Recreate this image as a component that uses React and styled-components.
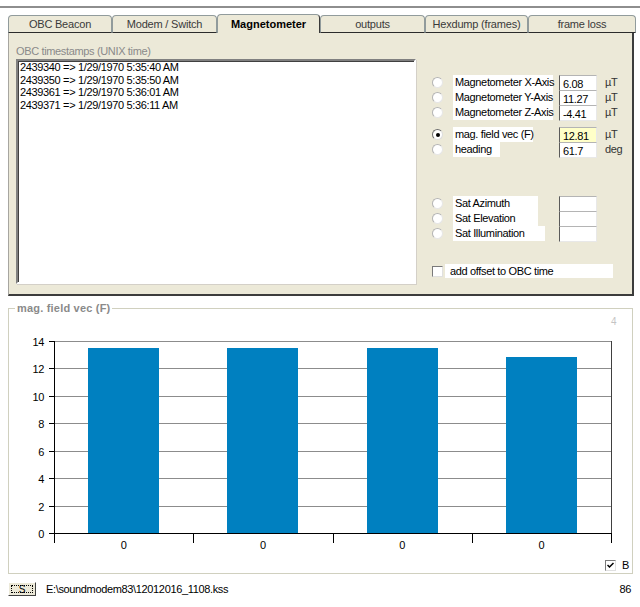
import React from "react";
import styled, { createGlobalStyle } from "styled-components";

const GlobalStyle = createGlobalStyle`
  html, body {
    margin: 0;
    padding: 0;
    background: #fff;
  }
  body {
    font-family: "Liberation Sans", Arial, sans-serif;
    font-size: 11px;
    letter-spacing: -0.35px;
    color: #000;
  }
`;

const Page = styled.div`
  width: 640px;
  height: 607px;
  padding-top: 6px;
  box-sizing: border-box;
  overflow: hidden;
`;

const TopRule = styled.div`
  height: 2px;
  background: #8e8e8e;
`;

const Body = styled.div`
  padding: 0 4px 0 8px;
`;

const TabStrip = styled.div`
  display: flex;
  align-items: flex-end;
  height: 19px;
  margin-top: 6px;
`;

const Tab = styled.div`
  width: ${(p) => p.$w}px;
  height: ${(p) => (p.$active ? 19 : 18)}px;
  box-sizing: border-box;
  display: flex;
  align-items: center;
  justify-content: center;
  background: #ece9d8;
  border: 1px solid #919b9c;
  border-bottom: ${(p) => (p.$active ? "none" : "1px solid #2b2b2b")};
  border-right-color: ${(p) => (p.$active ? "#3a3a3a" : "#919b9c")};
  border-radius: 4px 4px 0 0;
  color: ${(p) => (p.$active ? "#000" : "#3a3a3a")};
  font-weight: ${(p) => (p.$active ? 700 : 400)};
  letter-spacing: ${(p) => (p.$active ? "0" : "-0.2px")};
  white-space: nowrap;
`;

const Panel = styled.div`
  width: 626px;
  height: 263px;
  box-sizing: border-box;
  background: #ece9d8;
  border-left: 1px solid #a7a6a0;
  border-right: 2px solid #3c3c3c;
  border-bottom: 2px solid #3c3c3c;
  display: flex;
  padding-left: 7px;
`;

const LeftCol = styled.div`
  width: 400px;
  display: flex;
  flex-direction: column;
`;

const Caption = styled.div`
  margin-top: 11px;
  height: 15px;
  line-height: 14px;
  color: #8a8a8a;
`;

const ListBox = styled.div`
  height: 225px;
  box-sizing: border-box;
  background: #fff;
  border: 2px solid;
  border-color: #808080 #fff #fff #808080;
  box-shadow: inset 1px 1px 0 #404040, 1px 1px 0 #d4d0c8;
  padding: 0 0 0 2px;
`;

const ListItem = styled.div`
  line-height: 12.5px;
  white-space: nowrap;
`;

const RightCol = styled.div`
  margin-left: 16px;
  display: flex;
  flex-direction: column;
`;

const RowGroup = styled.div`
  display: grid;
  grid-template-columns: 21px 106px 38px auto;
  grid-auto-rows: 15px;
  margin-top: ${(p) => p.$top}px;
`;

const Cell = styled.div`
  display: flex;
  align-items: center;
`;

const Radio = styled.span`
  width: 11px;
  height: 11px;
  box-sizing: border-box;
  border-radius: 50%;
  border: 1px solid;
  border-color: ${(p) =>
    p.$checked ? "#6f6f6f #dcdcdc #dcdcdc #6f6f6f" : "#b4b4b4 #e6e6e6 #e6e6e6 #b4b4b4"};
  background: #fff;
  display: flex;
  align-items: center;
  justify-content: center;

  &::after {
    content: "";
    width: 4px;
    height: 4px;
    border-radius: 50%;
    background: ${(p) => (p.$checked ? "#000" : "transparent")};
  }
`;

const Label = styled.span`
  display: block;
  width: ${(p) => p.$w}px;
  height: 15px;
  line-height: 14px;
  padding-left: 2px;
  box-sizing: border-box;
  background: #fff;
  white-space: nowrap;
`;

const TextBox = styled.div`
  width: 38px;
  height: 16px;
  box-sizing: border-box;
  background: ${(p) => (p.$hl ? "#ffffc8" : "#fff")};
  border-left: 1px solid #5a5a5a;
  border-top: 1px solid #b4b4b4;
  border-right: 1px solid #e8e8e8;
  border-bottom: 1px solid #e8e8e8;
  padding: 2px 0 0 3px;
  line-height: 13px;
`;

const Unit = styled.div`
  padding-left: 8px;
  line-height: 14px;
  color: #333;
`;

const CheckRow = styled.div`
  display: flex;
  align-items: center;
  margin-top: 23px;
`;

const CheckBox = styled.span`
  width: 11px;
  height: 11px;
  box-sizing: border-box;
  background: #fff;
  border: 1px solid;
  border-color: #7a7a7a #e0e0e0 #e0e0e0 #7a7a7a;
  display: flex;
  align-items: center;
  justify-content: center;
`;

const CheckLabel = styled.span`
  margin-left: 2px;
  width: 168px;
  height: 14px;
  line-height: 14px;
  padding-left: 5px;
  box-sizing: border-box;
  background: #fff;
  white-space: nowrap;
`;

const Group = styled.fieldset`
  position: relative;
  margin: 6px 0 0 0;
  padding: 0;
  width: 625px;
  height: 272px;
  box-sizing: border-box;
  border: 1px solid #d0d0bf;
  min-width: 0;
`;

const Legend = styled.legend`
  margin-left: 6px;
  padding: 0 2px;
  font-weight: 700;
  letter-spacing: 0.2px;
  color: #8a8a8a;
  line-height: 13px;
`;

const CornerMark = styled.span`
  position: absolute;
  top: 0;
  right: 3px;
  width: 31px;
  height: 13px;
  background: #fff;
  color: #c4c4c4;
  font-size: 10px;
  line-height: 13px;
  text-align: center;
`;

const Chart = styled.svg`
  display: block;
`;

const LegendRow = styled.div`
  display: flex;
  justify-content: flex-end;
  align-items: center;
  height: 14px;
  padding-right: 3px;
  gap: 6px;
`;

const StatusBar = styled.div`
  display: flex;
  align-items: center;
  height: 14px;
  margin-top: 8px;
`;

const SmallButton = styled.div`
  width: 28px;
  height: 14px;
  box-sizing: border-box;
  background: #ece9d8;
  border: 1px solid;
  border-color: #fff #404040 #404040 #fff;
  display: flex;
  align-items: center;
  justify-content: center;
  font-size: 10px;
  outline: 1px dotted #000;
  outline-offset: -4px;
`;

const PathText = styled.span`
  margin-left: 10px;
`;

const Count = styled.span`
  margin-left: auto;
  padding-right: 5px;
`;

const tabs = [
  { name: "OBC Beacon", w: 104 },
  { name: "Modem / Switch", w: 105 },
  { name: "Magnetometer", w: 103, active: true },
  { name: "outputs", w: 105 },
  { name: "Hexdump (frames)", w: 103 },
  { name: "frame loss", w: 108 },
];

const stamps = [
  "2439340 => 1/29/1970 5:35:40 AM",
  "2439350 => 1/29/1970 5:35:50 AM",
  "2439361 => 1/29/1970 5:36:01 AM",
  "2439371 => 1/29/1970 5:36:11 AM",
];

const axisRows = [
  { label: "Magnetometer X-Axis", w: 100, value: "6.08", unit: "µT" },
  { label: "Magnetometer Y-Axis", w: 100, value: "11.27", unit: "µT" },
  { label: "Magnetometer Z-Axis", w: 100, value: "-4.41", unit: "µT" },
];

const fieldRows = [
  { label: "mag. field vec (F)", w: 80, value: "12.81", unit: "µT", checked: true, hl: true },
  { label: "heading", w: 47, value: "61.7", unit: "deg" },
];

const satRows = [
  { label: "Sat Azimuth", w: 85 },
  { label: "Sat Elevation", w: 85 },
  { label: "Sat Illumination", w: 92 },
];

const bars = [13.5, 13.5, 13.5, 12.81];

// plot geometry in page coordinates
const X0 = 54;
const X1 = 611;
const Y0 = 533;
const YTOP = 341;
const unit = (Y0 - YTOP) / 14;
const cat = (X1 - X0) / bars.length;

function Rows({ rows, top }) {
  return (
    <RowGroup $top={top}>
      {rows.map((r) => (
        <React.Fragment key={r.label}>
          <Cell>
            <Radio $checked={r.checked} />
          </Cell>
          <Cell>
            <Label $w={r.w}>{r.label}</Label>
          </Cell>
          <Cell>
            <TextBox $hl={r.hl}>{r.value}</TextBox>
          </Cell>
          <Unit>{r.unit}</Unit>
        </React.Fragment>
      ))}
    </RowGroup>
  );
}

function BarChart() {
  const grid = [0, 2, 4, 6, 8, 10, 12, 14];
  return (
    <Chart width="623" height="243" viewBox="9 315 623 243">
      {grid.map((v) => {
        const y = Math.round(Y0 - v * unit) + 0.5;
        return (
          <g key={v}>
            {v > 0 && <line x1={X0} x2={X1} y1={y} y2={y} stroke="#8c8c8c" />}
            <line x1={X0 - 5} x2={X0} y1={y} y2={y} stroke="#000" />
            <text
              x={44}
              y={y + 4}
              textAnchor="end"
              fontSize="11"
              fontFamily="Liberation Sans, Arial, sans-serif"
            >
              {v}
            </text>
          </g>
        );
      })}
      {bars.map((b, i) => {
        const x = X0 + i * cat + 34;
        const top = Y0 - b * unit;
        return (
          <rect key={i} x={Math.round(x)} y={Math.round(top)} width={71} height={Math.round(Y0 - top)} fill="#0080c0" />
        );
      })}
      <line x1={X1 + 0.5} x2={X1 + 0.5} y1={YTOP} y2={Y0} stroke="#404040" />
      <line x1={X0 + 0.5} x2={X0 + 0.5} y1={YTOP} y2={Y0} stroke="#000" />
      <line x1={X0} x2={X1 + 1} y1={Y0 + 0.5} y2={Y0 + 0.5} stroke="#000" />
      {[0, 1, 2, 3, 4].map((i) => {
        const x = Math.round(X0 + i * cat) + 0.5;
        return <line key={i} x1={x} x2={x} y1={Y0} y2={Y0 + 10} stroke="#000" />;
      })}
      {bars.map((b, i) => (
        <text
          key={i}
          x={X0 + i * cat + cat / 2}
          y={549}
          textAnchor="middle"
          fontSize="11"
          fontFamily="Liberation Sans, Arial, sans-serif"
        >
          0
        </text>
      ))}
    </Chart>
  );
}

const App = () => {
  return (
    <Page>
      <GlobalStyle />
      <TopRule />
      <Body>
        <TabStrip>
          {tabs.map((t) => (
            <Tab key={t.name} $w={t.w} $active={t.active}>
              {t.name}
            </Tab>
          ))}
        </TabStrip>
        <Panel>
          <LeftCol>
            <Caption>OBC timestamps (UNIX time)</Caption>
            <ListBox>
              {stamps.map((s) => (
                <ListItem key={s}>{s}</ListItem>
              ))}
            </ListBox>
          </LeftCol>
          <RightCol>
            <Rows rows={axisRows} top={42} />
            <Rows rows={fieldRows} top={7} />
            <Rows rows={satRows} top={39} />
            <CheckRow>
              <CheckBox />
              <CheckLabel>add offset to OBC time</CheckLabel>
            </CheckRow>
          </RightCol>
        </Panel>
        <Group>
          <Legend>mag. field vec (F)</Legend>
          <CornerMark>4</CornerMark>
          <BarChart />
          <LegendRow>
            <CheckBox>
              <svg width="7" height="7" viewBox="0 0 7 7">
                <path d="M0.5 3 L2.5 5 L6.5 1" stroke="#000" strokeWidth="1.5" fill="none" />
              </svg>
            </CheckBox>
            <span>B</span>
          </LegendRow>
        </Group>
        <StatusBar>
          <SmallButton>S</SmallButton>
          <PathText>E:\soundmodem83\12012016_1108.kss</PathText>
          <Count>86</Count>
        </StatusBar>
      </Body>
    </Page>
  );
};

export default App;
